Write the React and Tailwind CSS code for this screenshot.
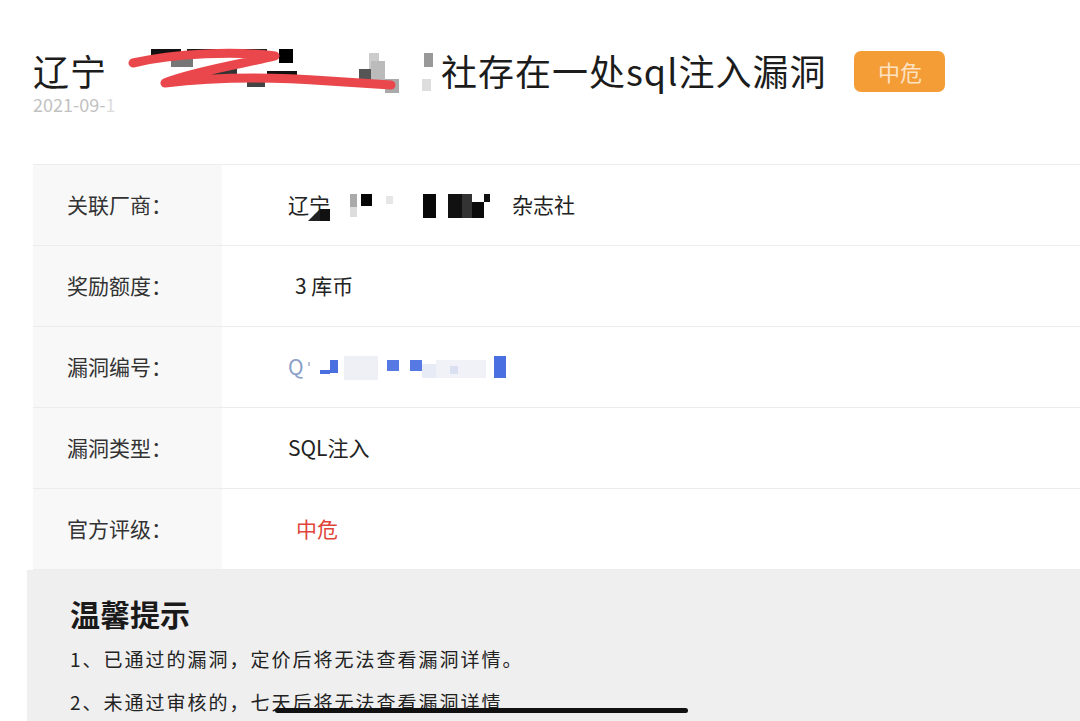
import React from 'react';

const font = { fontFamily: '"Noto Sans CJK SC", "Noto Sans", sans-serif' };

// mosaic + scribble over the vendor name in the title
function TitleRedaction() {
  return (
    <svg width="322" height="62" viewBox="0 0 322 62" className="shrink-0">
      <rect x="32" y="10" width="30" height="8" fill="#111" />
      <rect x="68" y="10" width="42" height="8" fill="#1a1a1a" />
      <rect x="116" y="10" width="32" height="8" fill="#222" />
      <rect x="52" y="18" width="22" height="10" fill="#777" />
      <rect x="160" y="10" width="14" height="14" fill="#000" />
      <rect x="86" y="30" width="32" height="10" fill="#333" />
      <rect x="148" y="32" width="30" height="9" fill="#111" />
      <rect x="128" y="38" width="18" height="10" fill="#444" />
      <rect x="250" y="14" width="10" height="18" fill="#ccc" />
      <rect x="240" y="30" width="12" height="12" fill="#555" />
      <rect x="252" y="22" width="14" height="22" fill="#bbb" />
      <rect x="266" y="40" width="14" height="14" fill="#aaa" />
      <rect x="305" y="14" width="9" height="14" fill="#999" />
      <rect x="303" y="40" width="9" height="12" fill="#ddd" />
      <path
        d="M14 24 C 56 14, 118 12, 156 17 C 128 24, 76 32, 46 44 C 96 38, 158 38, 210 42 L 272 46"
        fill="none"
        stroke="#e9474b"
        strokeWidth="9"
        strokeLinecap="round"
        strokeLinejoin="round"
      />
    </svg>
  );
}

function VendorValue() {
  return (
    <div className="flex items-center">
      <span className="relative">
        辽宁
        <svg width="24" height="14" viewBox="0 0 24 14" className="absolute left-[20px] top-[18px]">
          <polygon points="0,14 12,2 12,14" fill="#222" />
          <rect x="12" y="2" width="10" height="12" fill="#111" />
        </svg>
      </span>
      <svg width="182" height="30" viewBox="0 0 182 30" className="shrink-0">
        <rect x="20" y="4" width="7" height="13" fill="#aaa" />
        <rect x="20" y="17" width="7" height="10" fill="#ddd" />
        <rect x="31" y="4" width="11" height="12" fill="#050505" />
        <rect x="56" y="6" width="7" height="8" fill="#e6e6e6" />
        <rect x="93" y="4" width="13" height="24" fill="#080808" />
        <rect x="118" y="4" width="14" height="24" fill="#111" />
        <rect x="132" y="4" width="10" height="24" fill="#333" />
        <rect x="142" y="12" width="12" height="16" fill="#0b0b0b" />
        <rect x="154" y="4" width="6" height="8" fill="#111" />
      </svg>
      <span>杂志社</span>
    </div>
  );
}

function IdValue() {
  return (
    <div className="flex items-center">
      <span className="text-[#8aa0c8]">Q</span>
      <svg width="250" height="34" viewBox="0 0 250 34" className="shrink-0">
        <rect x="4" y="12" width="2" height="4" fill="#b9c4dc" />
        <rect x="40" y="6" width="34" height="24" fill="#eef0f6" />
        <rect x="16" y="20" width="10" height="4" fill="#4a6fe0" />
        <rect x="26" y="10" width="8" height="13" fill="#4a6fe0" />
        <rect x="83" y="10" width="12" height="11" fill="#5679e4" />
        <rect x="106" y="10" width="12" height="11" fill="#5679e4" />
        <rect x="118" y="14" width="14" height="14" fill="#e6ebf5" />
        <rect x="132" y="10" width="50" height="18" fill="#f0f2f8" />
        <rect x="146" y="16" width="8" height="8" fill="#d8e0f2" />
        <rect x="190" y="6" width="12" height="22" fill="#4a6fe0" />
      </svg>
    </div>
  );
}

const rows = [
  { label: '关联厂商：', value: <VendorValue /> },
  { label: '奖励额度：', value: <span className="pl-[7px]">3 库币</span> },
  { label: '漏洞编号：', value: <IdValue /> },
  { label: '漏洞类型：', value: <span>SQL注入</span> },
  { label: '官方评级：', value: <span className="pl-[8px] text-[#e0453c]">中危</span> },
];

export default function App() {
  return (
    <div className="relative w-[1080px] h-[721px] overflow-hidden bg-white text-[#222]" style={font}>
      {/* header */}
      <div className="h-[164px] pl-[33px] pt-[47px]">
        <div className="flex items-center h-[46px]">
          <span className="text-[36px] leading-none tracking-[1px] text-[#1c1c1c]">辽宁</span>
          <div className="ml-[12px] h-[46px] flex items-center">
            <TitleRedaction />
          </div>
          <span className="text-[36px] leading-none tracking-[1px] text-[#1c1c1c]">社存在一处sql注入漏洞</span>
          <span className="ml-[28px] mt-[2px] flex items-center justify-center w-[91px] h-[41px] rounded-[7px] bg-[#f49d37] text-[22px] text-[#fde2c2]">
            中危
          </span>
        </div>
        <div className="mt-[1px] text-[18px] leading-[20px] text-[#c2c2c2]">
          2021-09-<span className="text-[#dcdcdc]">1</span>
        </div>
      </div>

      {/* detail table */}
      <div className="ml-[33px] border-t border-[#ededed]">
        {rows.map((r) => (
          <div key={r.label} className="flex h-[81px] border-b border-[#ececec]">
            <div className="w-[189px] shrink-0 bg-[#f8f8f8] pl-[34px] flex items-center text-[21px] text-[#333]">
              {r.label}
            </div>
            <div className="flex-1 bg-white pl-[66px] flex items-center text-[21px] text-[#222]">
              {r.value}
            </div>
          </div>
        ))}
      </div>

      {/* tips */}
      <div className="ml-[27px] h-[160px] bg-[#efefef] pl-[43px] pt-[27px]">
        <div className="text-[30px] leading-[32px] font-bold text-[#1a1a1a]">温馨提示</div>
        <div className="mt-[18px] text-[19px] leading-[24px] tracking-[2px] text-[#222]">
          1、已通过的漏洞，定价后将无法查看漏洞详情。
        </div>
        <div className="mt-[19px] text-[19px] leading-[24px] tracking-[2px] text-[#222]">
          2、未通过审核的，七天后将无法查看漏洞详情
        </div>
      </div>

      {/* home indicator */}
      <div className="absolute left-[275px] top-[708px] w-[413px] h-[5px] rounded-full bg-[#111]" />
    </div>
  );
}
